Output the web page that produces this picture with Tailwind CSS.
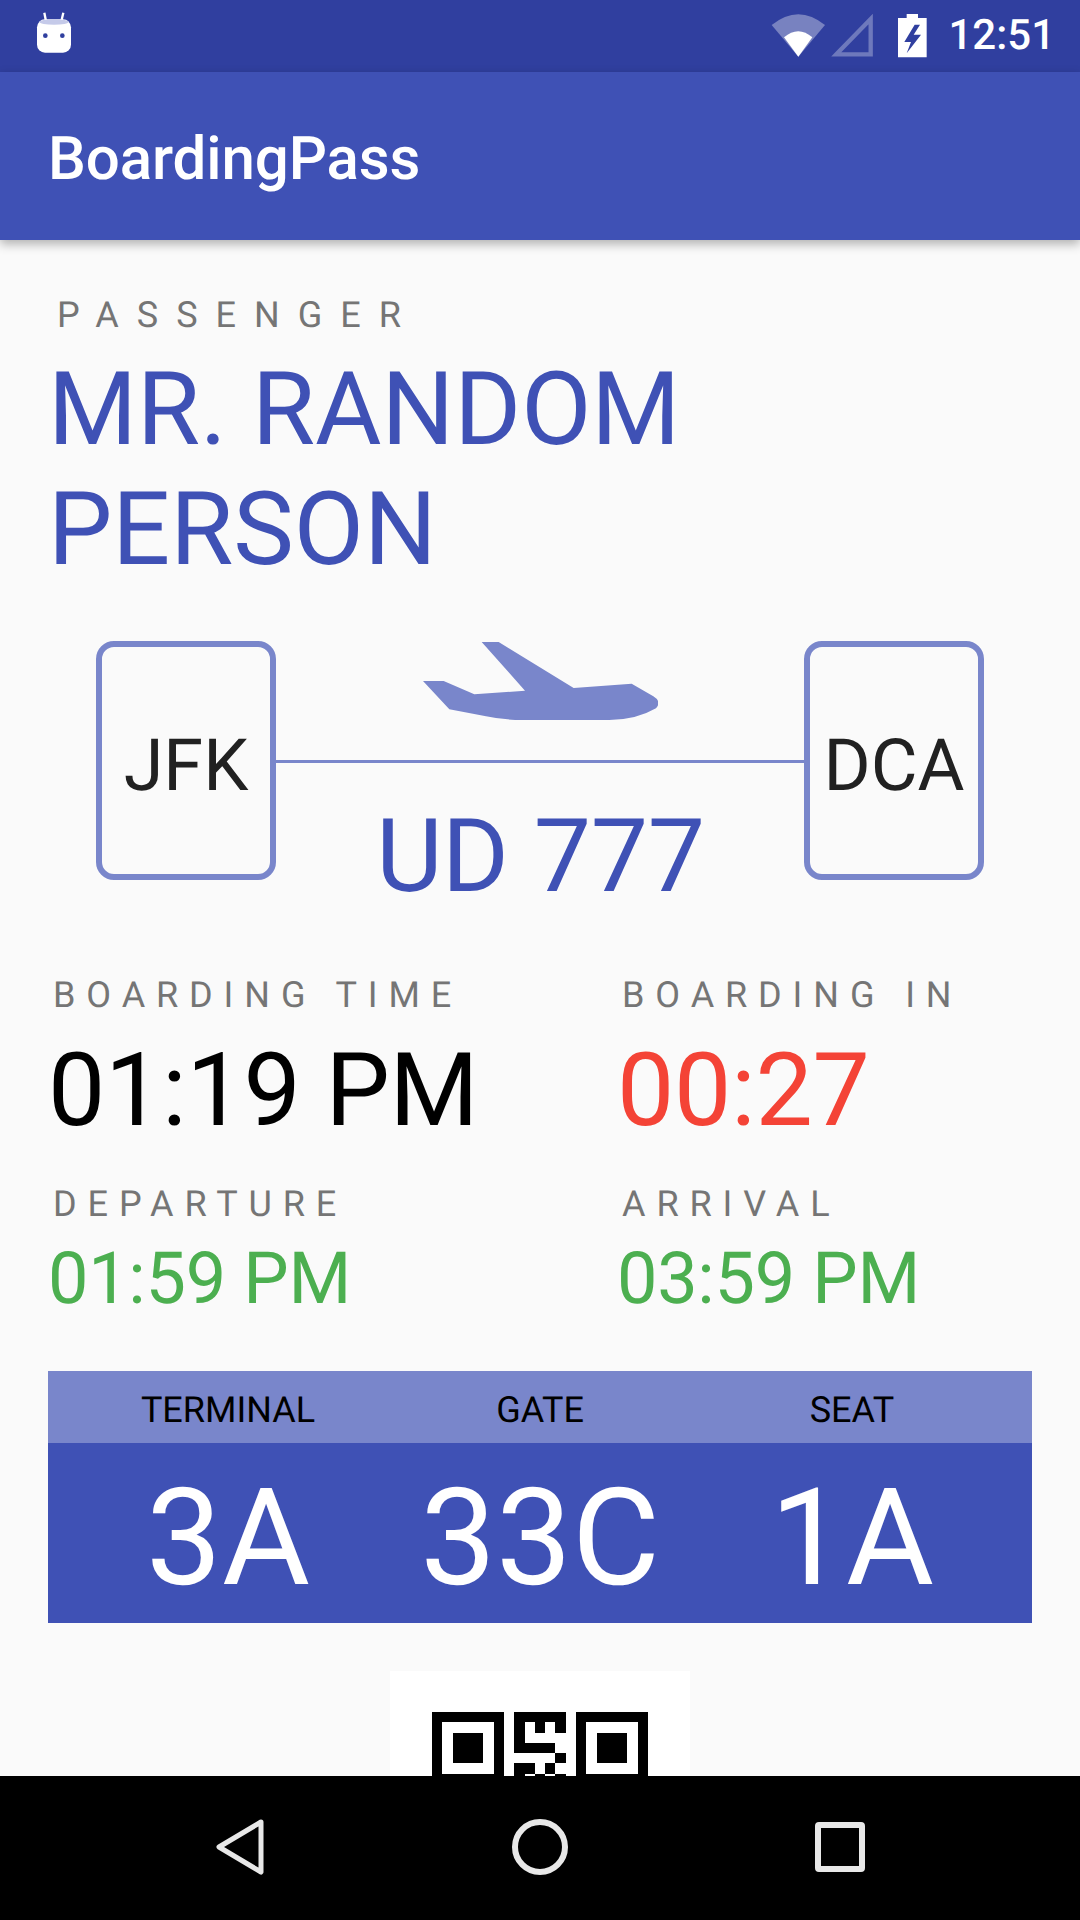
<!DOCTYPE html>
<html lang="en">
<head>
    <title>BoardingPass</title>
    <script src="https://cdn.jsdelivr.net/npm/@tailwindcss/browser@4"></script>
</head>
<body class="font-['Roboto',sans-serif] [text-rendering:geometricPrecision]">
<div class="w-[1080px] h-[1920px] flex flex-col overflow-hidden bg-[#FAFAFA]">
    <!-- status bar -->
    <div class="h-[72px] shrink-0 bg-[#303F9F] flex items-center justify-between">
        <svg class="w-[120px] h-[72px]" viewBox="0 0 360 216">
            <path d="M133 38 L138 64 M190 38 L184 64" stroke="#fff" stroke-width="7" fill="none"/>
            <rect x="111" y="58" width="102" height="100" rx="24" fill="#fff"/>
            <ellipse cx="162" cy="66" rx="44" ry="8" fill="#C5CAE9"/>
            <circle cx="136" cy="107" r="7" fill="#303F9F"/>
            <circle cx="187" cy="107" r="7" fill="#303F9F"/>
        </svg>
        <div class="flex items-center pr-[25px]">
            <svg class="w-[187px] h-[72px]" viewBox="0 0 561 216">
                <path d="M68 75 Q148 10 228 75 L148 170 Z" fill="#fff" fill-opacity="0.35"/>
                <path d="M105 112 Q148 75 190 112 L148 170 Z" fill="#fff"/>
                <path d="M262 163 L365 57 V163 Z" fill="none" stroke="#fff" stroke-opacity="0.3" stroke-width="13"/>
                <path fill-rule="evenodd" fill="#fff" d="M447 54 H473 V42 H507 V54 H533 V172 H447 Z M497 74 L466 126 H486 L473 160 L516 104 H494 L513 74 Z"/>
            </svg>
            <span class="pl-[12px] text-[42px] font-medium leading-none text-white">12:51</span>
        </div>
    </div>

    <!-- app bar -->
    <div class="relative z-10 h-[168px] shrink-0 bg-[#3F51B5] flex items-center pl-[48px] pt-[5px] shadow-[0_4px_10px_rgba(0,0,0,0.3)]">
        <h1 class="text-[60px] font-medium leading-none tracking-[-0.1px] text-white">BoardingPass</h1>
    </div>

    <!-- boarding pass -->
    <div class="flex-1 min-h-0 overflow-hidden">
        <p class="mt-[51px] ml-[57px] h-[48px] text-[36px] leading-[48px] tracking-[18px] text-[#757575]">PASSENGER</p>
        <h2 class="mt-[10px] ml-[48px] w-[800px] text-[102px] leading-[120px] text-[#3F51B5]">MR. RANDOM PERSON</h2>

        <div class="mt-[52px] ml-[96px] flex h-[239px] w-[888px]">
            <div class="w-[180px] shrink-0 rounded-[18px] border-[6px] border-[#7986CB] flex items-center justify-center pt-[10px] text-[72px] text-[#212121]">JFK</div>
            <div class="flex-1 flex flex-col items-center">
                <svg class="w-[235px] h-[78px] mt-[1px] ml-[1px] shrink-0" viewBox="131 67 705 234">
                    <path fill="#7986CB" d="M307 67 H358 L583 205 L757 192 L822 230 Q848 246 830 266 Q770 301 690 301 H430 Q370 301 320 290 L210 269 L131 184 H193 L285 224 L437 213 Z"/>
                </svg>
                <div class="w-full h-[3px] mt-[40px] shrink-0 bg-[#7986CB]"></div>
                <p class="text-[102px] leading-[120px] mt-[33px] ml-[1px] shrink-0 tracking-[-0.3px] whitespace-nowrap text-[#3F51B5]">UD 777</p>
            </div>
            <div class="w-[180px] shrink-0 rounded-[18px] border-[6px] border-[#7986CB] flex items-center justify-center pt-[10px] text-[72px] text-[#212121]">DCA</div>
        </div>

        <div class="mt-[91px] pl-[48px] grid grid-cols-[569px_1fr]">
            <div>
                <p class="ml-[5px] text-[36px] leading-[48px] tracking-[10.9px] text-[#757575]">BOARDING TIME</p>
                <p class="mt-[11px] text-[102px] leading-[120px] tracking-[-0.3px] text-black whitespace-nowrap">01:19 PM</p>
            </div>
            <div>
                <p class="ml-[5px] text-[36px] leading-[48px] tracking-[10.9px] text-[#757575]">BOARDING IN</p>
                <p class="mt-[11px] text-[102px] leading-[120px] tracking-[-0.3px] text-[#F44336]">00:27</p>
            </div>
            <div class="mt-[30px]">
                <p class="ml-[5px] text-[36px] leading-[48px] tracking-[10.9px] text-[#757575]">DEPARTURE</p>
                <p class="mt-[9px] text-[72px] leading-[84px] tracking-[-0.3px] text-[#4CAF50] whitespace-nowrap">01:59 PM</p>
            </div>
            <div class="mt-[30px]">
                <p class="ml-[5px] text-[36px] leading-[48px] tracking-[10.9px] text-[#757575]">ARRIVAL</p>
                <p class="mt-[9px] text-[72px] leading-[84px] tracking-[-0.3px] text-[#4CAF50] whitespace-nowrap">03:59 PM</p>
            </div>
        </div>

        <div class="mt-[50px] mx-[48px]">
            <div class="h-[72px] bg-[#7986CB] px-6 pt-[6px] grid grid-cols-3 items-center text-center text-[36px] text-black">
                <span>TERMINAL</span>
                <span>GATE</span>
                <span>SEAT</span>
            </div>
            <div class="h-[180px] bg-[#3F51B5] px-6 pt-[10px] grid grid-cols-3 items-center text-center text-[135px] leading-[158px] text-white">
                <span>3A</span>
                <span>33C</span>
                <span>1A</span>
            </div>
        </div>

        <!-- qr code, cut off by the nav bar -->
        <div class="mt-[48px] mx-auto w-[300px] h-[300px] bg-white flex justify-center pt-[41px]">
            <svg class="w-[216px] h-[216px]" viewBox="0 0 21 21" shape-rendering="crispEdges">
                <path fill-rule="evenodd" d="M0 0H7V7H0Z M1 1V6H6V1Z M2 2H5V5H2Z M14 0H21V7H14Z M15 1V6H20V1Z M16 2H19V5H16Z"/>
                <path d="M8 0H13V1H8Z M8 1H9V4H8Z M10 1H11V2H10Z M12 1H13V2H12Z M8 3H12V4H8Z M12 4H13V5H12Z M8 5H10V6H8Z M11 5H12V6H11Z M8 6H9V7H8Z M10 6H11V7H10Z M12 6H13V7H12Z"/>
            </svg>
        </div>
    </div>

    <!-- nav bar -->
    <div class="relative z-10 h-[144px] shrink-0 bg-black flex items-center justify-center pb-[2px]">
        <div class="w-[300px] flex justify-center">
            <svg class="w-[48px] h-[56px]" viewBox="0 0 48 56">
                <path d="M45 3 L3 28 L45 53 Z" fill="none" stroke="#E8E8E8" stroke-width="5" stroke-linejoin="round"/>
            </svg>
        </div>
        <div class="w-[300px] flex justify-center">
            <div class="w-[56px] h-[56px] rounded-full border-[6px] border-[#E8E8E8]"></div>
        </div>
        <div class="w-[300px] flex justify-center">
            <div class="w-[50px] h-[50px] rounded-[4px] border-[6px] border-[#E8E8E8]"></div>
        </div>
    </div>
</div>
</body>
</html>
